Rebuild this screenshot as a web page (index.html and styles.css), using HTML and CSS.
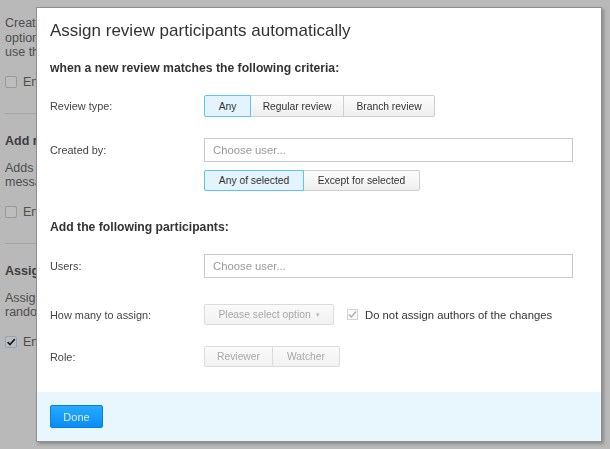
FILE: index.html
```html
<!DOCTYPE html>
<html>
<head>
<meta charset="utf-8">
<link rel="stylesheet" href="styles.css">
</head>
<body>
<div class="page">
  <section class="sec">
    <p class="desc">Create<br>option<br>use th</p>
    <label class="chk"><span class="box"></span>En</label>
  </section>
  <section class="sec">
    <h3 class="sec-title">Add r</h3>
    <p class="desc">Adds r<br>messa</p>
    <label class="chk"><span class="box"></span>En</label>
  </section>
  <section class="sec last">
    <h3 class="sec-title">Assign</h3>
    <p class="desc">Assign<br>randor</p>
    <label class="chk"><span class="box on"><svg viewBox="0 0 12 12" width="12" height="12"><path d="M2 6.2 L4.8 9 L10.5 2.5" fill="none" stroke="#1c1c1c" stroke-width="2"/></svg></span>En</label>
  </section>
</div>
<div class="below"></div>

<div class="modal">
  <div class="modal-body">
    <h2 class="title">Assign review participants automatically</h2>
    <h4 class="subhead">when a new review matches the following criteria:</h4>

    <div class="row r-type">
      <div class="label">Review type:</div>
      <div class="ctrl">
        <div class="group">
          <button class="btn sel">Any</button><button class="btn">Regular review</button><button class="btn">Branch review</button>
        </div>
      </div>
    </div>

    <div class="row r-created">
      <div class="label lbl-input">Created by:</div>
      <div class="ctrl col">
        <div class="input">Choose user...</div>
        <div class="group g2">
          <button class="btn sel">Any of selected</button><button class="btn">Except for selected</button>
        </div>
      </div>
    </div>

    <h4 class="subhead sh2">Add the following participants:</h4>

    <div class="row r-users">
      <div class="label lbl-input">Users:</div>
      <div class="ctrl"><div class="input">Choose user...</div></div>
    </div>

    <div class="row r-many">
      <div class="label">How many to assign:</div>
      <div class="ctrl">
        <button class="btn dis sel-opt">Please select option <span class="caret">&#9662;</span></button>
        <label class="cb"><span class="cbox"><svg viewBox="0 0 11 11" width="11" height="11"><path d="M2 5.5 L4.3 8 L9 2.5" fill="none" stroke="#b0b0b0" stroke-width="1.4"/></svg></span>Do not assign authors of the changes</label>
      </div>
    </div>

    <div class="row r-role">
      <div class="label">Role:</div>
      <div class="ctrl">
        <div class="group">
          <button class="btn dis">Reviewer</button><button class="btn dis">Watcher</button>
        </div>
      </div>
    </div>
  </div>
  <div class="modal-footer">
    <button class="done">Done</button>
  </div>
</div>
</body>
</html>
```

FILE: styles.css
```css
*, *::before, *::after {
  box-sizing: border-box;
}
html, body {
  margin: 0;
  padding: 0;
}
body {
  width: 610px;
  height: 449px;
  overflow: hidden;
  background: #b9b9b9;
  font-family: "Liberation Sans", Arial, sans-serif;
  color: #4e4e4e;
}
.page {
  padding: 0 0 0 5px;
  width: 36px;
  overflow: hidden;
}
.sec {
  width: 200px;
  border-bottom: 1px solid #a6a6a6;
  padding: 16px 0 24px;
}
.sec.last {
  border-bottom: none;
  padding-bottom: 6px;
}
.sec + .sec {
  padding-top: 20px;
}
.desc {
  margin: 0;
  font-size: 12.5px;
  line-height: 14.5px;
  white-space: nowrap;
}
.sec-title {
  margin: 0 0 13px;
  font-size: 12.5px;
  line-height: 14px;
  font-weight: bold;
  color: #3e3e3e;
}
.chk {
  display: flex;
  align-items: center;
  gap: 6px;
  margin-top: 15px;
  font-size: 12.5px;
  white-space: nowrap;
}
.box {
  flex: none;
  width: 12px;
  height: 12px;
  border: 1px solid #9a9a9a;
  border-radius: 2px;
  background: #bdbdbd;
  display: inline-flex;
  align-items: center;
  justify-content: center;
}
.box.on {
  border-color: #8aa7bd;
}
.below {
  margin-left: 102px;
  height: 80px;
  border-left: 1px solid #7a7a7a;
}

.modal {
  position: fixed;
  left: 36px;
  top: 7px;
  width: 566px;
  height: 435px;
  background: #fff;
  border: 1px solid #8f8f8f;
  box-shadow: 2px 2px 3px rgba(0,0,0,0.25);
  display: flex;
  flex-direction: column;
}
.modal-body {
  flex: 1;
  padding: 13px 13px 0;
}
.title {
  margin: 0;
  font-size: 17px;
  line-height: 20px;
  font-weight: normal;
  color: #333;
}
.subhead {
  margin: 20px 0 0;
  font-size: 12.2px;
  line-height: 14px;
  font-weight: bold;
  color: #333;
}
.sh2 {
  margin-top: 29px;
}
.row {
  display: flex;
  align-items: center;
}
.label {
  width: 154px;
  flex: none;
  font-size: 10.9px;
  color: #444;
  white-space: nowrap;
}
.lbl-input {
  align-self: flex-start;
  line-height: 24px;
}
.ctrl {
  display: flex;
  align-items: center;
}
.ctrl.col {
  flex-direction: column;
  align-items: flex-start;
}
.r-type { margin-top: 20px; }
.r-created { margin-top: 21px; }
.r-users { margin-top: 20px; }
.r-many { margin-top: 26px; }
.r-role { margin-top: 21px; }

.group {
  display: flex;
}
.g2 {
  margin-top: 8px;
}
.btn {
  font-family: "Liberation Sans", Arial, sans-serif;
  font-size: 10.3px;
  color: #333;
  height: 22px;
  padding: 0;
  white-space: nowrap;
  background: linear-gradient(#fdfdfd, #efefef);
  border: 1px solid #cfcfcf;
  margin: 0;
  margin-left: -1px;
  border-radius: 0;
}
.group .btn:first-child {
  margin-left: 0;
  border-radius: 2px 0 0 2px;
}
.group .btn:last-child {
  border-radius: 0 2px 2px 0;
}
.r-type .btn:nth-child(1) { width: 47px; }
.r-type .btn:nth-child(2) { width: 94px; }
.r-type .btn:nth-child(3) { width: 92px; }
.g2 .btn { height: 21px; }
.g2 .btn:nth-child(1) { width: 100px; }
.g2 .btn:nth-child(2) { width: 117px; }
.btn.sel {
  background: #e3f4fe;
  border-color: #5cc2f8;
  position: relative;
  z-index: 1;
}
.btn.dis {
  color: #a9a9a9;
  background: linear-gradient(#fafafa, #f2f2f2);
  border-color: #dcdcdc;
  height: 21px;
}
.r-role .btn:nth-child(1) { width: 69px; }
.r-role .btn:nth-child(2) { width: 68px; }
.sel-opt {
  width: 130px;
  margin-left: 0;
  border-radius: 2px;
}
.caret {
  font-size: 7px;
  color: #b5b5b5;
  margin-left: 2px;
  vertical-align: 1px;
}
.input {
  width: 369px;
  height: 24px;
  border: 1px solid #c9c9c9;
  padding: 0 8px;
  font-size: 11.3px;
  line-height: 22px;
  color: #999;
}
.cb {
  display: flex;
  align-items: center;
  margin-left: 13px;
  font-size: 11.3px;
  color: #333;
  white-space: nowrap;
}
.cbox {
  width: 11px;
  height: 11px;
  border: 1px solid #d3d3d3;
  display: inline-flex;
  align-items: center;
  justify-content: center;
  margin-right: 7px;
  background: #fafafa;
}
.cbox svg { flex: none; }

.modal-footer {
  height: 49px;
  background: #e8f6fe;
  display: flex;
  align-items: center;
  padding-left: 13px;
}
.done {
  width: 53px;
  height: 23px;
  border: 1px solid #0a7fd6;
  border-radius: 2px;
  background: linear-gradient(#28aaff, #0a8df3);
  color: #dcefff;
  font-family: "Liberation Sans", Arial, sans-serif;
  font-size: 11px;
  padding: 0;
}
```
